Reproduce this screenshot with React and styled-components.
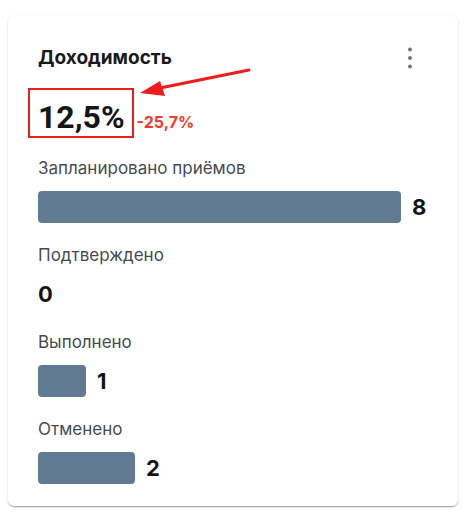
import React from "react";
import styled, { createGlobalStyle } from "styled-components";

const Global = createGlobalStyle`
  html, body { margin: 0; padding: 0; background: #ffffff; }
  body { font-family: Inter, "Noto Sans", sans-serif; }
`;

const Page = styled.div`
  padding: 16px 8px;
`;

const Card = styled.div`
  position: relative;
  width: 450px;
  box-sizing: border-box;
  background: #fff;
  border-radius: 6px;
  box-shadow: 0 2px 1px -1px rgba(0,0,0,0.2), 0 1px 1px 0 rgba(0,0,0,0.14), 0 1px 3px 0 rgba(0,0,0,0.12);
  padding: 30px 30px 22px 30px;
`;

const Header = styled.div`
  display: flex;
  align-items: center;
  justify-content: space-between;
  height: 24px;
`;

const Title = styled.h2`
  margin: 0;
  font-size: 19px;
  line-height: 24px;
  font-weight: 700;
  color: #1a1a1a;
`;

const MenuButton = styled.button`
  border: 0;
  background: transparent;
  padding: 0;
  width: 24px;
  height: 24px;
  margin-right: 6px;
  display: flex;
  align-items: center;
  justify-content: center;
  color: #757575;
`;

const ValueRow = styled.div`
  display: flex;
  align-items: baseline;
  gap: 12px;
  margin-top: 27px;
  height: 40px;
`;

const Highlight = styled.span`
  position: relative;
  font-family: Roboto, "Noto Sans", sans-serif;
  font-size: 32px;
  font-weight: 700;
  color: #161616;
  line-height: 40px;
  &::after {
    content: "";
    position: absolute;
    left: -10px;
    right: -9px;
    top: -9px;
    bottom: -1px;
    border: 2px solid #ee1c1c;
  }
`;

const Delta = styled.span`
  font-size: 16px;
  font-weight: 700;
  color: #f33a2a;
`;

const Arrow = styled.svg`
  position: absolute;
  left: 128px;
  top: 50px;
  overflow: visible;
`;

const Stat = styled.div`
  margin-top: ${(p) => p.$top}px;
`;

const Label = styled.div`
  font-size: 17px;
  color: #454b52;
  line-height: 22px;
`;

const BarRow = styled.div`
  display: flex;
  align-items: center;
  gap: 11px;
  margin-top: 12px;
  height: 32px;
`;

const Bar = styled.div`
  height: 32px;
  border-radius: 4px;
  background: #617b92;
  flex: none;
`;

const Count = styled.span`
  font-size: 22px;
  font-weight: 700;
  color: #141414;
`;

const stats = [
  { label: "Запланировано приёмов", value: 8, width: 363 },
  { label: "Подтверждено", value: 0, width: 0 },
  { label: "Выполнено", value: 1, width: 48 },
  { label: "Отменено", value: 2, width: 97 },
];

export default function App() {
  return (
    <>
      <Global />
      <Page>
        <Card>
          <Header>
            <Title>Доходимость</Title>
            <MenuButton aria-label="menu">
              <svg width="24" height="24" viewBox="0 0 24 24" fill="currentColor">
                <circle cx="12" cy="3.5" r="2" />
                <circle cx="12" cy="12" r="2" />
                <circle cx="12" cy="20.5" r="2" />
              </svg>
            </MenuButton>
          </Header>
          <ValueRow>
            <Highlight>12,5%</Highlight>
            <Delta>-25,7%</Delta>
          </ValueRow>
          <Arrow width="120" height="35" viewBox="0 0 120 35">
            <line x1="113" y1="4" x2="24" y2="22" stroke="#ee1c1c" strokeWidth="3" strokeLinecap="round" />
            <polygon points="4,27 24,15 29,30" fill="#ee1c1c" />
          </Arrow>
          {stats.map((s, i) => (
            <Stat key={s.label} $top={i === 0 ? 20 : 21}>
              <Label>{s.label}</Label>
              <BarRow>
                {s.width > 0 && <Bar style={{ width: s.width }} />}
                <Count>{s.value}</Count>
              </BarRow>
            </Stat>
          ))}
        </Card>
      </Page>
    </>
  );
}
